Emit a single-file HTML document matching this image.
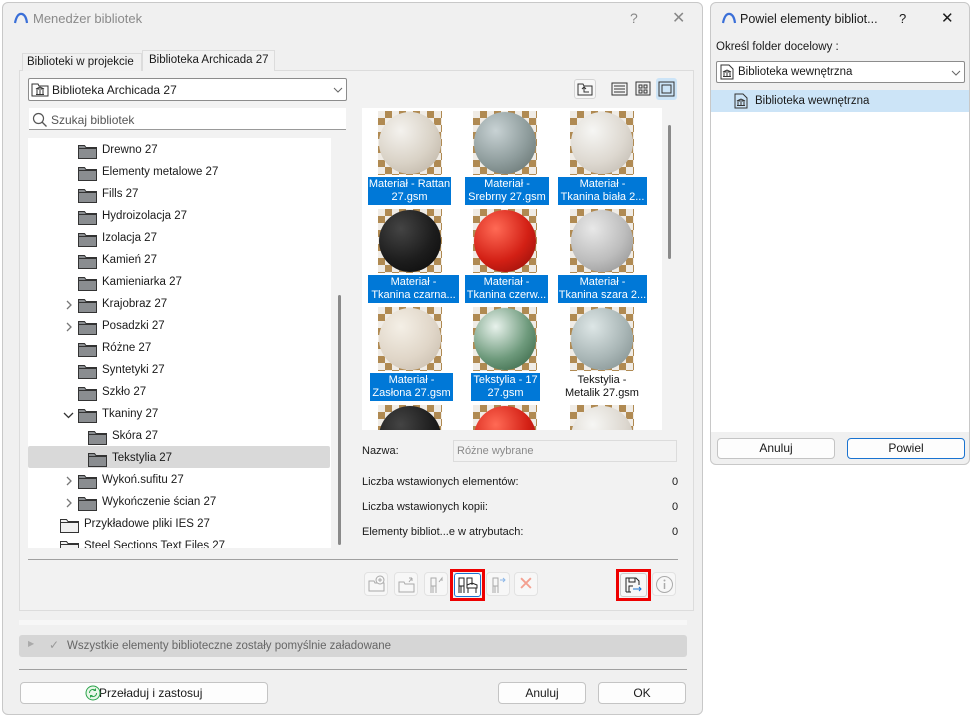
<!DOCTYPE html>
<html><head><meta charset="utf-8">
<style>
*{box-sizing:border-box;margin:0;padding:0}
body{width:974px;height:718px;background:#fff;font-family:"Liberation Sans",sans-serif;font-size:11px;color:#1a1a1a;position:relative;overflow:hidden}
.a{position:absolute}
.dlg{background:#f0f0f0;border:1px solid #c8c8c8;border-radius:6px}
.t{position:absolute;white-space:nowrap}
.btn{position:absolute;background:#fdfdfd;border:1px solid #c4c4c4;border-radius:4px;text-align:center;font-size:12px}
.th{position:absolute;width:64px;height:64px;background:repeating-conic-gradient(#b08a52 0 25%,#f0ece6 0 50%) 0 0/14px 14px;overflow:hidden}
.sp{position:absolute;left:1px;top:1px;width:62px;height:62px;border-radius:50%}
.lb{position:absolute;text-align:center;font-size:11px;line-height:13px;padding:1px 0;color:#fff;background:#0078d7}
.tb{position:absolute;width:24px;height:24px;border:1px solid #e2e2e2;border-radius:4px;background:#f7f7f7}
</style></head><body>

<div class="a dlg" style="left:2px;top:2px;width:701px;height:713px"></div>
<svg class="a" style="left:13px;top:12px" width="16" height="12"><path d="M2 11 Q4 1 9 2 Q13 3 14 11" fill="none" stroke="#3a6fd8" stroke-width="2.2"/></svg>
<div class="t" style="left:33px;top:11px;font-size:13px;color:#8a8a8a">Menedżer bibliotek</div>
<div class="t" style="left:630px;top:10px;font-size:14px;color:#888">?</div>
<div class="t" style="left:672px;top:8px;font-size:16px;color:#888">✕</div>

<div class="a" style="left:19px;top:70px;width:675px;height:541px;border:1px solid #dcdcdc;background:#f2f2f2"></div>
<div class="a" style="left:22px;top:53px;width:120px;height:18px;border:1px solid #dcdcdc;border-bottom:none;background:#f0f0f0"></div>
<div class="t" style="left:27px;top:56px;font-size:11.5px">Biblioteki w projekcie</div>
<div class="a" style="left:142px;top:50px;width:133px;height:21px;border:1px solid #dcdcdc;border-bottom:none;background:#f2f2f2"></div>
<div class="t" style="left:149px;top:54px;font-size:11.5px">Biblioteka Archicada 27</div>

<div class="a" style="left:28px;top:78px;width:319px;height:23px;border:1px solid #8c8c8c;border-radius:2px;background:#fff"></div>
<svg class="a" style="left:31px;top:82px" width="18" height="15"><path d="M1 2h6l1 2h9v10H1z" fill="none" stroke="#333"/><path d="M5 7l4-2 4 2zM6 8v4M9 8v4M12 8v4M5 12.5h8" stroke="#333" fill="none"/></svg>
<div class="t" style="left:52px;top:83px;font-size:12px">Biblioteka Archicada 27</div>
<svg class="a" style="left:333px;top:87px" width="10" height="6"><path d="M1 1l4 4 4-4" fill="none" stroke="#666"/></svg>

<div class="a" style="left:29px;top:108px;width:317px;height:22px;background:#fff;border-bottom:1px solid #999"></div>
<svg class="a" style="left:32px;top:112px" width="16" height="16"><circle cx="6.5" cy="6.5" r="5" fill="none" stroke="#555" stroke-width="1.2"/><path d="M10 10l4.5 4.5" stroke="#555" stroke-width="1.3"/></svg>
<div class="t" style="left:51px;top:113px;font-size:12px;color:#555">Szukaj bibliotek</div>

<div class="a" style="left:28px;top:138px;width:303px;height:410px;background:#fff;overflow:hidden">
<div class="a" style="left:0;top:308px;width:302px;height:22px;background:#d9d9d9;border-radius:2px"></div>
</div>
<div class="a" style="left:338px;top:295px;width:3px;height:250px;background:#8a8a8a;border-radius:2px"></div>

<div id="tree"></div>

<div class="a" style="left:362px;top:108px;width:300px;height:322px;background:#fff;overflow:hidden" id="grid"></div>
<div class="a" style="left:668px;top:125px;width:3px;height:134px;background:#8a8a8a;border-radius:2px"></div>

<div class="a" style="left:574px;top:79px;width:22px;height:20px;border:1px solid #d5d5d5;border-radius:3px;background:#f7f7f7"></div>
<svg class="a" style="left:577px;top:82px" width="16" height="14"><path d="M1 2h5l1 2h8v9H1z" fill="none" stroke="#333"/><path d="M5 7l2-2 2 2M7 5v5h5" fill="none" stroke="#333"/></svg>
<svg class="a" style="left:611px;top:82px" width="17" height="14"><rect x="1" y="1" width="15" height="12" fill="none" stroke="#333"/><path d="M3 4h11M3 7h11M3 10h11" stroke="#333"/></svg>
<svg class="a" style="left:635px;top:81px" width="16" height="15"><rect x="1" y="1" width="14" height="13" fill="none" stroke="#333"/><rect x="4" y="4" width="3" height="3" fill="none" stroke="#333"/><rect x="9" y="4" width="3" height="3" fill="none" stroke="#333"/><rect x="4" y="9" width="3" height="3" fill="none" stroke="#333"/><rect x="9" y="9" width="3" height="3" fill="none" stroke="#333"/></svg>
<div class="a" style="left:656px;top:78px;width:21px;height:22px;background:#cce4f7;border-radius:3px"></div>
<svg class="a" style="left:658px;top:81px" width="17" height="16"><rect x="1" y="1" width="15" height="14" fill="none" stroke="#333"/><rect x="4" y="4" width="9" height="8" fill="none" stroke="#333"/></svg>

<div class="t" style="left:362px;top:445px">Nazwa:</div>
<div class="a" style="left:453px;top:440px;width:224px;height:22px;border:1px solid #dcdcdc"></div>
<div class="t" style="left:457px;top:445px;color:#8a8a8a">Różne wybrane</div>
<div class="t" style="left:362px;top:476px">Liczba wstawionych elementów:</div><div class="t" style="left:672px;top:476px">0</div>
<div class="t" style="left:362px;top:501px">Liczba wstawionych kopii:</div><div class="t" style="left:672px;top:501px">0</div>
<div class="t" style="left:362px;top:526px">Elementy bibliot...e w atrybutach:</div><div class="t" style="left:672px;top:526px">0</div>

<div class="a" style="left:28px;top:559px;width:650px;height:1px;background:#a0a0a0"></div>

<div class="tb" style="left:364px;top:572px"></div>
<svg class="a" style="left:367px;top:574px" width="20" height="20"><path d="M2 7h5l1 2h9v8H2z" fill="none" stroke="#aaa"/><circle cx="13" cy="6" r="4" fill="#f7f7f7" stroke="#aaa"/><path d="M13 4v4M11 6h4" stroke="#aaa"/></svg>
<div class="tb" style="left:394px;top:572px"></div>
<svg class="a" style="left:397px;top:575px" width="20" height="20"><path d="M2 7h5l1 2h9v8H2z" fill="none" stroke="#aaa"/><path d="M12 7l3-4M15 3v3M15 3h-3" fill="none" stroke="#aaa"/></svg>
<div class="tb" style="left:424px;top:572px"></div>
<svg class="a" style="left:428px;top:575px" width="18" height="20"><path d="M3 18V3h5v8H3M8 11v7M5 11v7" fill="none" stroke="#aaa"/><path d="M11 7l3-4v3" fill="none" stroke="#aaa"/></svg>
<div class="a" style="left:450px;top:569px;width:35px;height:32px;border:3px solid #e00"></div>
<div class="a" style="left:454px;top:573px;width:27px;height:24px;border:1px solid #1a73d0;border-radius:3px;background:#fff"></div>
<svg class="a" style="left:457px;top:576px" width="22" height="18"><path d="M2 17V2h5v8H2M7 10v7M4 10v7" fill="none" stroke="#222"/><path d="M10 9V2h5v7M10 9l5-2 5 2v3H10zM11 12v5M19 12v5" fill="none" stroke="#222"/></svg>
<div class="tb" style="left:486px;top:572px"></div>
<svg class="a" style="left:490px;top:575px" width="18" height="20"><path d="M3 18V3h5v8H3M8 11v7M5 11v7" fill="none" stroke="#aaa"/><path d="M10 5h5M13 3l2 2-2 2" fill="none" stroke="#8db7e8"/></svg>
<div class="tb" style="left:514px;top:572px"></div>
<div class="t" style="left:518px;top:573px;font-size:19px;color:#f4a090">✕</div>
<div class="a" style="left:616px;top:569px;width:35px;height:32px;border:3px solid #e00"></div>
<div class="a" style="left:620px;top:573px;width:27px;height:24px;border:1px solid #ccc;border-radius:3px;background:#f7f7f7"></div>
<svg class="a" style="left:624px;top:576px" width="20" height="18"><path d="M2 16V2h10l3 3v4M7 16H2M5 2v4h6V2M5 16v-6h4" fill="none" stroke="#222"/><path d="M9 13h8M15 11l2 2-2 2" fill="none" stroke="#1a73d0"/></svg>
<div class="tb" style="left:652px;top:572px"></div>
<svg class="a" style="left:655px;top:575px" width="19" height="19"><circle cx="9.5" cy="9.5" r="8" fill="none" stroke="#aaa"/><path d="M9.5 8v6" stroke="#aaa" stroke-width="1.5"/><circle cx="9.5" cy="5.5" r="1" fill="#aaa"/></svg>

<div class="a" style="left:19px;top:620px;width:668px;height:5px;background:#f7f7f7"></div>
<div class="a" style="left:19px;top:635px;width:668px;height:22px;background:#d6d6d6;border-radius:3px"></div>
<div class="t" style="left:28px;top:639px;font-size:8px;color:#aaa">▶</div>
<div class="t" style="left:49px;top:638px;font-size:12px;color:#999">✓</div>
<div class="t" style="left:67px;top:640px;font-size:11.5px;color:#666">Wszystkie elementy biblioteczne zostały pomyślnie załadowane</div>
<div class="a" style="left:19px;top:669px;width:668px;height:1px;background:#a0a0a0"></div>

<div class="btn" style="left:20px;top:682px;width:248px;height:22px;line-height:20px">&nbsp;&nbsp;&nbsp;&nbsp;Przeładuj i zastosuj</div>
<svg class="a" style="left:85px;top:685px" width="16" height="16"><circle cx="8" cy="8" r="7" fill="#e8f7e8" stroke="#2aa34a"/><path d="M4.5 8a3.5 3.5 0 0 1 6-2.5M11.5 8a3.5 3.5 0 0 1-6 2.5M10.5 3.5v2h-2M5.5 12.5v-2h2" fill="none" stroke="#2aa34a"/></svg>
<div class="btn" style="left:498px;top:682px;width:88px;height:22px;line-height:20px">Anuluj</div>
<div class="btn" style="left:598px;top:682px;width:88px;height:22px;line-height:20px">OK</div>

<div class="a dlg" style="left:710px;top:2px;width:260px;height:463px"></div>
<div class="a" style="left:711px;top:90px;width:258px;height:342px;background:#fff"></div>
<div class="a" style="left:711px;top:90px;width:258px;height:22px;background:#cce4f7"></div>
<svg class="a" style="left:721px;top:12px" width="16" height="12"><path d="M2 11 Q4 1 9 2 Q13 3 14 11" fill="none" stroke="#3a6fd8" stroke-width="2.2"/></svg>
<div class="t" style="left:740px;top:12px;font-size:12.5px">Powiel elementy bibliot...</div>
<div class="t" style="left:899px;top:11px;font-size:13px">?</div>
<div class="t" style="left:941px;top:9px;font-size:15px">✕</div>
<div class="t" style="left:716px;top:41px;font-size:11.5px">Określ folder docelowy :</div>
<div class="a" style="left:716px;top:61px;width:249px;height:22px;border:1px solid #8c8c8c;border-radius:2px;background:#fff"></div>
<svg class="a" style="left:720px;top:64px" width="14" height="16"><path d="M1 1h8l4 4v10H1z" fill="none" stroke="#333"/><path d="M3 8l4-2 4 2zM4 9v3M7 9v3M10 9v3M3 12.5h8" fill="none" stroke="#333"/></svg>
<div class="t" style="left:738px;top:66px;font-size:11.5px">Biblioteka wewnętrzna</div>
<svg class="a" style="left:951px;top:70px" width="10" height="6"><path d="M1 1l4 4 4-4" fill="none" stroke="#666"/></svg>
<svg class="a" style="left:734px;top:93px" width="14" height="16"><path d="M1 1h8l4 4v10H1z" fill="none" stroke="#333"/><path d="M3 8l4-2 4 2zM4 9v3M7 9v3M10 9v3M3 12.5h8" fill="none" stroke="#333"/></svg>
<div class="t" style="left:755px;top:95px;font-size:11.5px">Biblioteka wewnętrzna</div>
<div class="btn" style="left:717px;top:438px;width:118px;height:21px;line-height:19px">Anuluj</div>
<div class="btn" style="left:847px;top:438px;width:118px;height:21px;line-height:19px;border-color:#1a73d0">Powiel</div>

<script>
var rows=[["Drewno 27",2,0],["Elementy metalowe 27",2,0],["Fills 27",2,0],["Hydroizolacja 27",2,0],["Izolacja 27",2,0],["Kamień 27",2,0],["Kamieniarka 27",2,0],["Krajobraz 27",2,1],["Posadzki 27",2,1],["Różne 27",2,0],["Syntetyki 27",2,0],["Szkło 27",2,0],["Tkaniny 27",2,2],["Skóra 27",3,0],["Tekstylia 27",3,0],["Wykoń.sufitu 27",2,1],["Wykończenie ścian 27",2,1],["Przykładowe pliki IES 27",1,0],["Steel Sections Text Files 27",1,0]];
var h="";
rows.forEach(function(r,i){var y=143+i*22;var fx=r[1]==1?60:r[1]==2?78:88;
var dark=r[1]>1;var ox=0,oy=0;
if(y+16>548){h+='<div class="a" style="left:28px;top:'+y+'px;width:303px;height:'+(548-y)+'px;overflow:hidden">';ox=28;oy=y;}
h+='<svg class="a" style="left:'+(fx-ox)+'px;top:'+(y+1-oy)+'px" width="19" height="15"><path d="M0.5 1.5h6l1.5 2h10.5v11H0.5z" fill="'+(dark?'#8a8d90':'#f0f0f0')+'" stroke="#333"/><path d="M0.5 4.5h18" stroke="#333"/></svg>';
h+='<div class="t" style="left:'+(fx+24-ox)+'px;top:'+(y+1-oy)+'px;font-size:11.5px">'+r[0]+'</div>';
if(ox)h+='</div>';
if(r[2]==1)h+='<svg class="a" style="left:65px;top:'+(y+3)+'px" width="8" height="10"><path d="M2 1l4 4-4 4" fill="none" stroke="#777" stroke-width="1.3"/></svg>';
if(r[2]==2)h+='<svg class="a" style="left:63px;top:'+(y+5)+'px" width="11" height="8"><path d="M1 1l4.5 4.5L10 1" fill="none" stroke="#333" stroke-width="1.3"/></svg>';
});
document.getElementById("tree").outerHTML=h;
var sp=[["#f4f2ee","#d9d2c6","#b8ad9e"],["#c8d2d4","#8e9c9c","#5e6b68"],["#f6f6f4","#ddd8d0","#bbb4aa"],["#444","#1d1d1d","#080808"],["#ff6a55","#d32015","#8a0c08"],["#e8e8e8","#bdbdbd","#8a8a8a"],["#f4efe6","#e0d6c8","#c4b8a8"],["#e8f2ec","#6e9a7c","#2c5a3a"],["#dde6e6","#a9b6b6","#7a8888"],["#444","#1d1d1d","#080808"],["#ff6a55","#d32015","#8a0c08"],["#f6f6f4","#ddd8d0","#bbb4aa"]];
var lbl=[["Materiał - Rattan","27.gsm",6,83],["Materiał -","Srebrny 27.gsm",103,84],["Materiał -","Tkanina biała 2...",196,89],["Materiał -","Tkanina czarna...",6,91],["Materiał -","Tkanina czerw...",103,83],["Materiał -","Tkanina szara 2...",196,89],["Materiał -","Zasłona 27.gsm",8,83],["Tekstylia - 17","27.gsm",109,69],["Tekstylia -","Metalik 27.gsm",0,0]];
var g="",cx=[16,111,208],ry=[3,101,199,297];
sp.forEach(function(c,i){var x=cx[i%3],y=ry[Math.floor(i/3)];
var extra=i==7?',repeating-linear-gradient(0deg,rgba(30,80,50,.55) 0 3px,transparent 3px 6px),repeating-linear-gradient(90deg,rgba(30,80,50,.55) 0 3px,transparent 3px 6px)':'';
g+='<div class="th" style="left:'+x+'px;top:'+y+'px"><div class="sp" style="background:radial-gradient(circle at 35% 30%,'+c[0]+' 0%,'+c[1]+' 55%,'+c[2]+' 100%)'+extra+'"></div></div>';});
lbl.forEach(function(l,i){var y=ry[Math.floor(i/3)]+66;
if(l[3])g+='<div class="lb" style="left:'+l[2]+'px;top:'+y+'px;width:'+l[3]+'px">'+l[0]+'<br>'+l[1]+'</div>';
else g+='<div class="lb" style="left:190px;top:'+y+'px;width:100px;background:none;color:#111">'+l[0]+'<br>'+l[1]+'</div>';});
document.getElementById("grid").innerHTML=g;
</script>
</body></html>
